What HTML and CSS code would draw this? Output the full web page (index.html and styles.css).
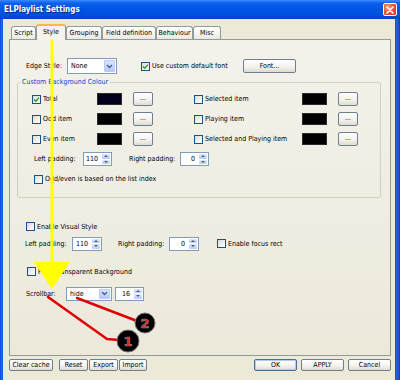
FILE: index.html
```html
<!DOCTYPE html>
<html>
<head>
<meta charset="utf-8">
<link rel="stylesheet" href="styles.css">
</head>
<body>
<div class="window">
  <div class="titlebar">
    <span class="title">ELPlaylist Settings</span>
    <span class="close"><svg width="8" height="8" viewBox="0 0 8 8"><path d="M1 1 L7 7 M7 1 L1 7" stroke="#fff" stroke-width="1.6" stroke-linecap="round"/></svg></span>
  </div>
  <div class="body">
    <div class="tabs">
      <div class="tab w-script">Script</div>
      <div class="tab active w-style">Style</div>
      <div class="tab w-group">Grouping</div>
      <div class="tab w-field">Field definition</div>
      <div class="tab w-behav">Behaviour</div>
      <div class="tab w-misc">Misc</div>
    </div>
    <div class="panel">
      <div class="row edge-row">
        <span class="lbl w-edge">Edge Style:</span>
        <div class="combo w-combo1"><span class="ctext">None</span><span class="drop"><svg width="7" height="5" viewBox="0 0 7 5"><path d="M1 1 L3.5 3.5 L6 1" fill="none" stroke="#4d6185" stroke-width="1.4"/></svg></span></div>
        <label class="chk w-usefont"><span class="box checked"><svg width="7" height="7" viewBox="0 0 7 7"><path d="M1 3.4 L2.8 5.2 L6 1.6" fill="none" stroke="#21a121" stroke-width="1.4"/></svg></span>Use custom default font</label>
        <span class="btn w-font">Font...</span>
      </div>

      <fieldset class="group">
        <legend>Custom Background Colour</legend>
        <div class="ginner">
          <div class="crow">
            <label class="chk w-cl"><span class="box checked"><svg width="7" height="7" viewBox="0 0 7 7"><path d="M1 3.4 L2.8 5.2 L6 1.6" fill="none" stroke="#21a121" stroke-width="1.4"/></svg></span>Total</label>
            <span class="swatch navy"></span>
            <span class="btn dots">...</span>
            <label class="chk w-cr"><span class="box"></span>Selected item</label>
            <span class="swatch"></span>
            <span class="btn dots">...</span>
          </div>
          <div class="crow">
            <label class="chk w-cl"><span class="box"></span>Odd item</label>
            <span class="swatch"></span>
            <span class="btn dots">...</span>
            <label class="chk w-cr"><span class="box"></span>Playing item</label>
            <span class="swatch"></span>
            <span class="btn dots">...</span>
          </div>
          <div class="crow">
            <label class="chk w-cl"><span class="box"></span>Even item</label>
            <span class="swatch"></span>
            <span class="btn dots">...</span>
            <label class="chk w-cr"><span class="box"></span>Selected and Playing item</label>
            <span class="swatch"></span>
            <span class="btn dots">...</span>
          </div>
          <div class="crow pad-row">
            <span class="lbl w-lp1">Left padding:</span>
            <div class="spin w-spin"><span class="stext">110</span><span class="sbtns"><i class="up"></i><i class="dn"></i></span></div>
            <span class="lbl w-rp1">Right padding:</span>
            <div class="spin w-spin"><span class="stext">0</span><span class="sbtns"><i class="up"></i><i class="dn"></i></span></div>
          </div>
          <div class="crow pad-row">
            <label class="chk"><span class="box"></span>Odd/even is based on the list index</label>
          </div>
        </div>
      </fieldset>

      <div class="row vis-row">
        <label class="chk"><span class="box"></span>Enable Visual Style</label>
      </div>
      <div class="row pad2-row">
        <span class="lbl w-lp2">Left padding:</span>
        <div class="spin w-spin2"><span class="stext">110</span><span class="sbtns"><i class="up"></i><i class="dn"></i></span></div>
        <span class="lbl w-rp2">Right padding:</span>
        <div class="spin w-spin2"><span class="stext">0</span><span class="sbtns"><i class="up"></i><i class="dn"></i></span></div>
        <label class="chk focus-chk"><span class="box"></span>Enable focus rect</label>
      </div>
      <div class="row paint-row">
        <label class="chk"><span class="box"></span>Paint transparent Background</label>
      </div>
      <div class="row scroll-row">
        <span class="lbl w-scroll">Scrollbar:</span>
        <div class="combo w-combo2"><span class="ctext">hide</span><span class="drop"><svg width="7" height="5" viewBox="0 0 7 5"><path d="M1 1 L3.5 3.5 L6 1" fill="none" stroke="#4d6185" stroke-width="1.4"/></svg></span></div>
        <div class="spin w-spin3"><span class="stext">16</span><span class="sbtns"><i class="up"></i><i class="dn"></i></span></div>
      </div>
    </div>

    <div class="footer">
      <div class="fleft">
        <span class="btn fb w-clear">Clear cache</span>
        <span class="btn fb w-reset">Reset</span>
        <span class="btn fb w-export">Export</span>
        <span class="btn fb w-import">Import</span>
      </div>
      <div class="fright">
        <span class="btn fb w-ok default">OK</span>
        <span class="btn fb w-ok">APPLY</span>
        <span class="btn fb w-ok">Cancel</span>
      </div>
    </div>
  </div>
</div>

<svg class="annot" width="400" height="380" viewBox="0 0 400 380">
  <line x1="52" y1="37" x2="52" y2="264" stroke="#ffff00" stroke-width="3"/>
  <polygon points="34,262 70,262 52,289" fill="#ffff00"/>
  <polyline points="48,297 107,339 119,340" fill="none" stroke="#e00000" stroke-width="2.5" stroke-linejoin="round" stroke-linecap="round"/>
  <line x1="77" y1="298" x2="137" y2="321" stroke="#e00000" stroke-width="2.5" stroke-linecap="round"/>
  <circle cx="145" cy="323" r="10" fill="#000" stroke="#777" stroke-width="1"/>
  <text class="num" x="145" y="328">2</text>
  <circle cx="128" cy="341" r="11" fill="#000" stroke="#777" stroke-width="1"/>
  <text class="num" x="128" y="346">1</text>
</svg>
</body>
</html>
```
FILE: styles.css
```css
* { box-sizing: border-box; }
html, body { margin: 0; padding: 0; }
body {
  width: 400px;
  height: 380px;
  overflow: hidden;
  position: relative;
  font-family: "DejaVu Sans Condensed", "DejaVu Sans", sans-serif;
  font-size: 7px;
  color: #000;
  background: #0b55d9;
}
.window {
  height: 380px;
  display: flex;
  flex-direction: column;
  background: linear-gradient(to right, #0a50d4 0, #1f6ae8 2px, #0a55d9 3px, #0a55d9 395px, #1e66e0 397px, #0840b8 400px);
}
.titlebar {
  height: 19px;
  flex: none;
  display: flex;
  align-items: center;
  justify-content: space-between;
  padding: 0 3px 0 4px;
  background: linear-gradient(#3d8dff 0, #0b60ee 3px, #0055e5 9px, #0050dc 15px, #0044c6 19px);
}
.title {
  color: #fff;
  font-weight: bold;
  font-size: 8px;
  text-shadow: 1px 1px 0 #0a2a8a;
}
.close {
  width: 14px;
  height: 13px;
  border: 1px solid #fff;
  border-radius: 2px;
  background: radial-gradient(circle at 35% 30%, #f29a7c, #e2552f 55%, #c33b18);
  display: flex;
  align-items: center;
  justify-content: center;
}
.body {
  flex: 1;
  margin: 0 5px 0 3px;
  background: #ece9d8;
  padding: 5px 4px 0 6px;
}
.tabs {
  display: flex;
  align-items: flex-end;
  height: 15px;
  margin-left: 2px;
}
.tab {
  height: 13px;
  border: 1px solid #919b9c;
  border-bottom: none;
  border-radius: 3px 3px 0 0;
  background: linear-gradient(#ffffff, #f4f3ee 60%, #e9e8e2);
  display: flex;
  align-items: center;
  justify-content: center;
  white-space: nowrap;
}
.tab.active {
  height: 16px;
  margin-bottom: -1px;
  position: relative;
  z-index: 1;
  border-top: 2px solid #f7bc3d;
  background: #f4f3ec;
  padding-bottom: 2px;
}
.w-script { width: 25px; }
.w-style { width: 30px; }
.w-group { width: 36px; }
.w-field { width: 54px; }
.w-behav { width: 37px; }
.w-misc { width: 28px; }

.panel {
  height: 317px;
  border: 1px solid #919b9c;
  background: linear-gradient(#f3f2ea, #ece9db);
}
.row {
  display: flex;
  align-items: center;
  white-space: nowrap;
}
.lbl { flex: none; color: #000; }
.chk {
  display: flex;
  align-items: center;
  flex: none;
  white-space: nowrap;
  color: #000;
}
.box {
  width: 9px;
  height: 9px;
  border: 1px solid #1c5180;
  background: linear-gradient(135deg, #dcdcd7, #ffffff);
  margin-right: 2px;
  display: flex;
  align-items: center;
  justify-content: center;
  flex: none;
}
.combo {
  display: flex;
  align-items: stretch;
  border: 1px solid #7f9db9;
  background: #fff;
  padding: 1px;
  flex: none;
}
.ctext { flex: 1; padding-left: 2px; display: flex; align-items: center; }
.drop {
  width: 11px;
  border: 1px solid #b9cbf3;
  border-radius: 1px;
  background: linear-gradient(#dde7fd, #b4c8f6);
  display: flex;
  align-items: center;
  justify-content: center;
}
.spin {
  display: flex;
  height: 14px;
  border: 1px solid #7f9db9;
  background: #fff;
  padding: 1px;
  flex: none;
}
.stext { flex: 1; text-align: right; padding-right: 4px; display: flex; align-items: center; justify-content: flex-end; }
.sbtns {
  width: 8px;
  display: flex;
  flex-direction: column;
  gap: 1px;
}
.sbtns i {
  flex: 1;
  border-radius: 1px;
  background: linear-gradient(#dde7fd, #b8cbf6);
  display: flex;
  align-items: center;
  justify-content: center;
}
.sbtns i::after {
  content: "";
  border-left: 2px solid transparent;
  border-right: 2px solid transparent;
}
.sbtns .up::after { border-bottom: 2px solid #4d6185; }
.sbtns .dn::after { border-top: 2px solid #4d6185; }
.btn {
  display: flex;
  align-items: center;
  justify-content: center;
  border: 1px solid #6f7f90;
  border-radius: 2px;
  background: linear-gradient(#ffffff, #f2f1ec 60%, #dedbd0);
  flex: none;
  white-space: nowrap;
}
.swatch {
  width: 25px;
  height: 12px;
  background: #000;
  border: 1px solid #2a2a2a;
  flex: none;
}
.swatch.navy { background: #00001c; }

.edge-row { margin-top: 18px; height: 16px; padding-left: 16px; }
.w-edge { width: 41px; }
.w-combo1 { width: 50px; height: 16px; }
.w-usefont { margin-left: 24px; width: 102px; }
.w-font { width: 53px; height: 14px; }

.group {
  margin: 3px 9px 0 7px;
  padding: 2px 0 8px 0;
  border: 1px solid #d0d0bf;
  border-radius: 3px;
  min-width: 0;
}
.group legend {
  color: #0046d5;
  padding: 0 2px;
  margin-left: 2px;
  line-height: 10px;
}
.ginner { padding-left: 14px; color: #000; }
.crow {
  display: flex;
  align-items: center;
  height: 20px;
  white-space: nowrap;
}
.w-cl { width: 65px; }
.w-cr { width: 108px; margin-left: 41px; }
.dots { width: 20px; height: 14px; margin-left: 11px; padding-bottom: 2px; }
.pad-row { padding-left: 2px; }
.w-lp1 { width: 49px; }
.w-rp1 { width: 51px; margin-left: 17px; }
.w-spin { width: 29px; }

.vis-row { margin-top: 20px; height: 17px; padding-left: 16px; }
.pad2-row { height: 17px; padding-left: 15px; }
.w-lp2 { width: 47px; }
.w-rp2 { width: 51px; margin-left: 16px; }
.w-spin2 { width: 30px; }
.focus-chk { margin-left: 18px; }
.paint-row { margin-top: 11px; height: 17px; padding-left: 17px; }
.scroll-row { margin-top: 5px; height: 17px; padding-left: 16px; }
.w-scroll { width: 40px; }
.w-combo2 { width: 46px; height: 14px; }
.w-spin3 { width: 29px; margin-left: 3px; }

.footer {
  margin-top: 3px;
  display: flex;
  justify-content: space-between;
}
.fleft, .fright { display: flex; }
.fb { height: 12px; }
.w-clear { width: 44px; }
.w-reset { width: 29px; margin-left: 6px; }
.w-export { width: 29px; margin-left: 1px; }
.w-import { width: 28px; margin-left: 1px; }
.w-ok { width: 43px; margin-left: 4px; }
.default { box-shadow: inset 0 0 0 1px #b2c9f2; border-color: #4a6d9c; }

.annot {
  position: absolute;
  left: 0;
  top: 0;
  pointer-events: none;
}
.num {
  font-family: "DejaVu Sans", sans-serif;
  font-weight: bold;
  font-size: 13px;
  fill: #e02020;
  stroke: #888;
  stroke-width: 0.6px;
  text-anchor: middle;
}
```
